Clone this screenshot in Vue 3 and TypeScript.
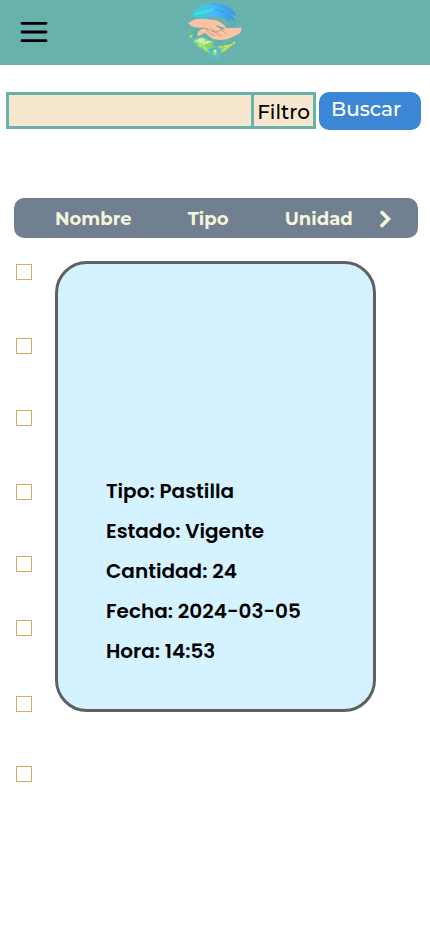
<script setup lang="ts">
import { ref } from 'vue'

interface Detail {
  label: string
  value: string
}

const query = ref('')
const selected = ref<boolean[]>(Array(8).fill(false))

const details: Detail[] = [
  { label: 'Tipo', value: 'Pastilla' },
  { label: 'Estado', value: 'Vigente' },
  { label: 'Cantidad', value: '24' },
  { label: 'Fecha', value: '2024-03-05' },
  { label: 'Hora', value: '14:53' },
]
</script>

<template>
  <div class="page">
    <header class="topbar">
      <button class="menu" type="button" aria-label="Menú">
        <svg viewBox="0 0 28 24" width="28" height="24" aria-hidden="true">
          <path d="M2 2.300h24M2 11h24M2 19.700h24" stroke="#000" stroke-width="2.800" stroke-linecap="round" />
        </svg>
      </button>
      <a class="logo" href="#" aria-label="Inicio">
        <svg viewBox="15 0 180 180" width="60" height="60" aria-hidden="true">
          <defs>
            <linearGradient id="sky" x1="0" y1="0" x2="1" y2="0">
              <stop offset="0" stop-color="#35d3dc" />
              <stop offset="0.5" stop-color="#49b9fb" />
              <stop offset="1" stop-color="#3b93e0" />
            </linearGradient>
            <linearGradient id="leaf" x1="0" y1="0" x2="1" y2="1">
              <stop offset="0" stop-color="#63cfa0" />
              <stop offset="1" stop-color="#9bd94a" />
            </linearGradient>
          </defs>
          <path d="M35 50C44 24 74 9 104 10C128 9 150 19 162 36L169 49L151 42L169 66L148 55L155 68L130 54C114 45 99 50 83 54C65 58 50 48 35 50Z" fill="url(#sky)" />
          <path d="M38 46C60 27 86 32 103 24C88 42 66 42 38 46Z" fill="#43e0cf" />
          <path d="M94 12C124 12 142 27 153 42M105 29C125 30 137 42 148 53" fill="none" stroke="#3c8fe0" stroke-width="2" />
          <path d="M29 86L32 111L49 132L76 154L104 175L130 156L155 138L164 127" fill="none" stroke="#a2cf45" stroke-width="2" stroke-dasharray="4 3" />
          <path d="M39 119L67 110L100 125L96 164L75 152L45 132Z" fill="url(#leaf)" />
          <path d="M113 139L161 129L149 143L119 163Z" fill="#9ed657" />
          <path d="M45 121L66 113L94 126L71 133Z" fill="#c3efb3" />
          <path d="M42 123L71 134L94 125M57 116L84 130M56 131L81 151M71 134L80 150M116 158L160 131M119 142L144 138" fill="none" stroke="#dcf78d" stroke-width="2" />
          <path d="M33 100L52 92M41 114L53 94M74 122L92 118M112 122L133 130L162 129M133 130L125 146M132 83L149 79L172 69" fill="none" stroke="#4aa3a2" stroke-width="2" />
          <path d="M24 70C40 56 57 55 76 57L105 60C122 65 133 75 139 83C133 87 119 77 107 76C122 85 134 97 140 105C132 107 116 94 105 87C115 96 122 103 123 109C114 107 103 97 94 88C99 97 105 103 104 107C94 106 84 94 76 86C61 80 47 91 24 70Z" fill="#fac4a4" />
          <path d="M58 92C70 80 85 85 94 91C109 101 119 91 132 85C149 80 165 87 185 82L181 99C161 110 145 120 120 120C99 121 87 109 76 99C67 100 61 107 54 108C49 104 53 98 58 92Z" fill="#fac4a4" />
          <path d="M55 91C69 79 84 86 94 92C109 102 119 92 133 85M80 86C85 99 96 106 104 106M95 85C106 99 116 106 124 108M108 77C121 84 133 97 140 104" fill="none" stroke="#ad8378" stroke-width="2" />
          <path d="M105 137C111 143 117 144 124 144V157C123 168 115 174 105 178C94 174 87 168 86 157V144C94 144 100 142 105 137Z" fill="#58c6d7" />
          <path d="M105 144C110 148 114 149 118 149V157C118 164 112 169 105 172C98 169 92 164 92 157V149C97 149 101 148 105 144Z" fill="#74c899" stroke="#3f9fba" stroke-width="2" />
          <circle cx="105" cy="153" r="4" fill="#e0f58c" />
          <path d="M105 154V163" stroke="#e0f58c" stroke-width="3" />
          <g fill="#4fbfcf">
            <circle cx="149" cy="79" r="3" /><circle cx="172" cy="69" r="3" />
            <circle cx="133" cy="130" r="4" /><circle cx="53" cy="93" r="3" />
          </g>
          <g fill="#bce35c">
            <circle cx="33" cy="109" r="4" /><circle cx="162" cy="129" r="4" />
            <circle cx="60" cy="137" r="5" /><circle cx="133" cy="150" r="4" />
          </g>
        </svg>
      </a>
    </header>

    <main>
      <form class="search" @submit.prevent>
        <div class="field">
          <input v-model="query" class="query" type="text" aria-label="Buscar medicamento" />
          <button class="filter" type="button">Filtro</button>
        </div>
        <button class="submit" type="submit">Buscar</button>
      </form>

      <table class="columns">
        <thead>
          <tr>
            <th class="name" scope="col">Nombre</th>
            <th class="kind" scope="col">Tipo</th>
            <th class="unit" scope="col">Unidad</th>
            <th class="next">
              <button type="button" aria-label="Siguiente">
                <svg viewBox="0 0 14 18" width="14" height="18" aria-hidden="true">
                  <path d="M4 2.500L10.500 9L4 15.500" fill="none" stroke="#f5f5dc" stroke-width="3.600" stroke-linecap="round" stroke-linejoin="miter" />
                </svg>
              </button>
            </th>
          </tr>
        </thead>
      </table>

      <section class="results">
        <div class="checks">
          <input
            v-for="(_, i) in selected"
            :key="i"
            v-model="selected[i]"
            type="checkbox"
            :aria-label="`Seleccionar fila ${i + 1}`"
          />
        </div>
        <article class="card">
          <p v-for="item in details" :key="item.label">{{ item.label }}: {{ item.value }}</p>
        </article>
      </section>
    </main>
  </div>
</template>

<style>
body {
  margin: 0;
  background: #fff;
}
</style>

<style scoped>
.page {
  font-family: Montserrat, "Open Sans", sans-serif;
  color: #000;
}

.page *,
.page *::before {
  box-sizing: border-box;
}

button {
  border: 0;
  padding: 0;
  background: none;
  color: inherit;
  font: inherit;
  cursor: pointer;
}

svg {
  display: block;
}

.topbar {
  display: grid;
  grid-template-columns: 1fr auto 1fr;
  align-items: center;
  height: 65px;
  padding: 0 20px;
  background: #67b2ad;
}

.menu {
  justify-self: start;
}

.logo {
  padding-bottom: 6px;
}

.search {
  display: flex;
  align-items: flex-start;
  gap: 3px;
  padding: 27px 9px 0 6px;
}

.field {
  display: flex;
  flex: 1;
  min-width: 0;
  height: 37px;
  border: 3px solid #67b2ad;
  background: #f7e7ce;
}

.query {
  flex: 1;
  min-width: 0;
  border: 0;
  padding: 0 8px;
  background: transparent;
  font: inherit;
  font-size: 20px;
  outline: none;
}

.filter {
  width: 62px;
  border-left: 3px solid #67b2ad;
  padding-top: 2px;
  font-size: 20px;
  font-weight: 500;
  line-height: 28px;
}

.submit {
  width: 102px;
  height: 38px;
  border-radius: 10px;
  padding: 0 12px 4px;
  background: #3c87d5;
  color: #fff;
  font-size: 20px;
  font-weight: 500;
  line-height: 28px;
  text-align: left;
}

.columns {
  width: calc(100% - 26px);
  height: 40px;
  margin: 68px 12px 0 14px;
  border-spacing: 0;
  table-layout: fixed;
  border-radius: 10px;
  background: #708090;
  color: #f5f5dc;
}

.columns th {
  padding: 2px 0 0;
  font-size: 18px;
  font-weight: 700;
  line-height: 24px;
  text-align: left;
  vertical-align: middle;
}

.columns .name {
  width: 43%;
  padding-left: 41px;
}

.columns .kind {
  width: 24%;
}

.columns .next {
  width: 10%;
}

.columns button {
  display: block;
}

.results {
  display: grid;
  grid-template-columns: 16px 1fr;
  align-items: start;
  column-gap: 23px;
  padding: 23px 54px 0 16px;
}

.checks {
  display: grid;
  grid-template-rows: 74px 72px 74px 72px 64px 76px 70px 16px;
  padding-top: 3px;
}

.checks input {
  appearance: none;
  width: 16px;
  height: 16px;
  margin: 0;
  border: 1px solid #cfac69;
  background: #fff;
}

.checks input:checked {
  background: #cfac69;
}

.card {
  display: flex;
  flex-direction: column;
  justify-content: flex-end;
  min-height: 451px;
  border: 3px solid #606060;
  border-radius: 32px;
  padding: 38px 24px 38px 48px;
  background: #d4f2ff;
  font-family: Poppins, Inter, sans-serif;
  font-size: 20px;
  font-weight: 600;
  line-height: 40px;
}

.card p {
  margin: 0;
}
</style>
